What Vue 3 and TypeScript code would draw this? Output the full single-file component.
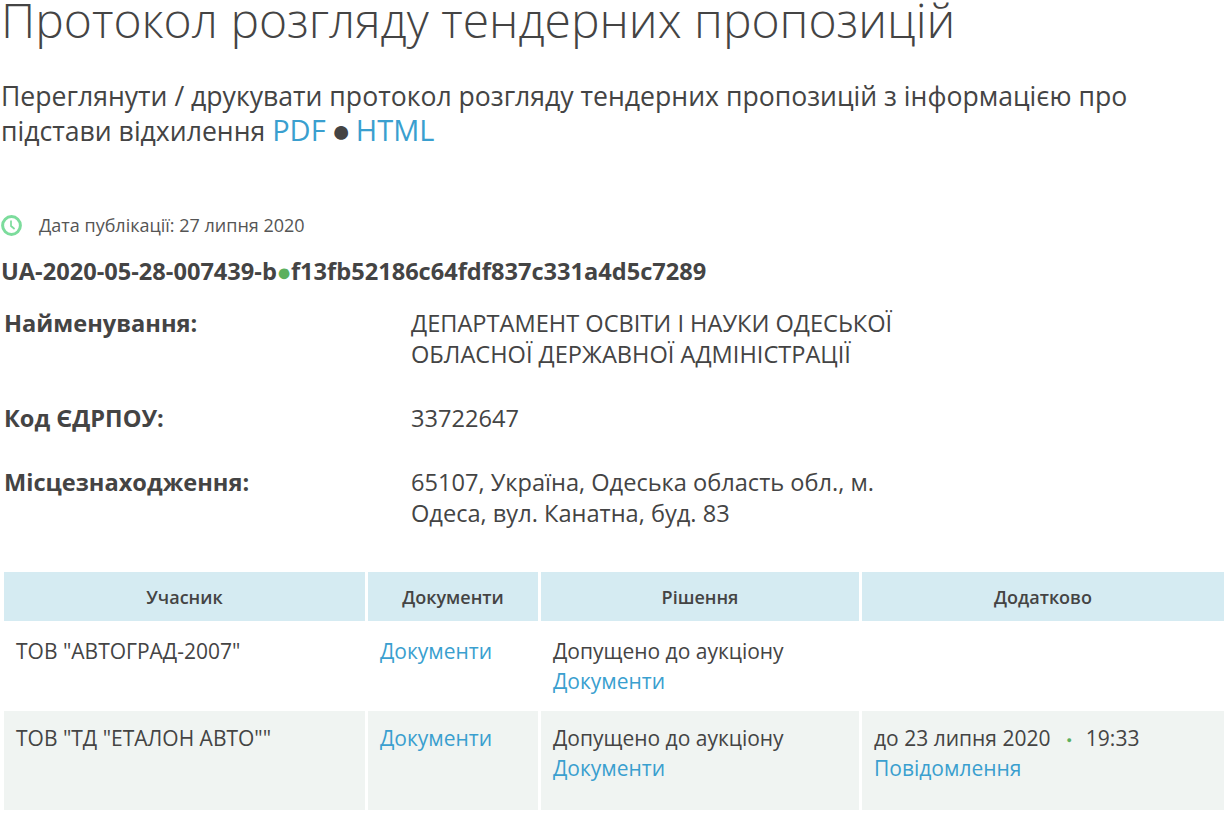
<script setup lang="ts">
interface Row {
  name: string
  extra?: { date: string; time: string; link: string }
}
const rows: Row[] = [
  { name: 'ТОВ "АВТОГРАД-2007"' },
  { name: 'ТОВ "ТД "ЕТАЛОН АВТО""', extra: { date: 'до 23 липня 2020', time: '19:33', link: 'Повідомлення' } }
]
</script>

<template>
  <div class="page">
    <h1 class="title">Протокол розгляду тендерних пропозицій</h1>
    <p class="lead">Переглянути / друкувати протокол розгляду тендерних пропозицій з інформацією про підстави відхилення <a href="#">PDF</a> <span class="sep">●</span> <a href="#">HTML</a></p>
    <div class="date">
      <svg class="clock" width="21" height="21" viewBox="0 0 21 21" fill="none">
        <circle cx="10.5" cy="10.5" r="8.9" stroke="#7cdc9c" stroke-width="3" />
        <path d="M10 5.5V11L13.6 14" stroke="#7cdc9c" stroke-width="1.7" />
      </svg>
      <span>Дата публікації: 27 липня 2020</span>
    </div>
    <div class="code">UA-2020-05-28-007439-b<span class="dot">●</span>f13fb52186c64fdf837c331a4d5c7289</div>
    <dl class="info">
      <dt>Найменування:</dt>
      <dd>ДЕПАРТАМЕНТ ОСВІТИ І НАУКИ ОДЕСЬКОЇ ОБЛАСНОЇ ДЕРЖАВНОЇ АДМІНІСТРАЦІЇ</dd>
      <dt>Код ЄДРПОУ:</dt>
      <dd>33722647</dd>
      <dt>Місцезнаходження:</dt>
      <dd>65107, Україна, Одеська область обл., м. Одеса, вул. Канатна, буд. 83</dd>
    </dl>
    <table class="table">
      <colgroup>
        <col class="c1" /><col class="c2" /><col class="c3" /><col class="c4" />
      </colgroup>
      <thead>
        <tr><th>Учасник</th><th>Документи</th><th>Рішення</th><th>Додатково</th></tr>
      </thead>
      <tbody>
        <tr v-for="r in rows" :key="r.name">
          <td>{{ r.name }}</td>
          <td><a href="#">Документи</a></td>
          <td>Допущено до аукціону<br /><a href="#">Документи</a></td>
          <td>
            <template v-if="r.extra">
              <div class="when">{{ r.extra.date }}<span class="mini">●</span>{{ r.extra.time }}</div><a href="#">{{ r.extra.link }}</a>
            </template>
          </td>
        </tr>
      </tbody>
    </table>
  </div>
</template>

<style scoped>
.page {
  width: 1229px;
  height: 819px;
  overflow: hidden;
  font-family: "Open Sans", sans-serif;
  color: #444;
  box-sizing: border-box;
  padding: 0 2px 0 1px;
}
a { color: #3a9fcf; text-decoration: none; }
.title {
  margin: -12px 0 0;
  font-size: 48px;
  line-height: 64px;
  font-weight: 300;
  white-space: nowrap;
}
.lead {
  margin: 27px 0 0;
  width: 1160px;
  font-size: 26.6px;
  line-height: 35px;
}
.lead a { font-size: 29px; line-height: 0; }
.sep { font-size: 32px; line-height: 0; margin: 0 -2px 0 -1px; vertical-align: -1px; }
.date {
  display: flex;
  align-items: center;
  gap: 17px;
  margin-top: 64px;
  font-size: 18px;
  line-height: 24px;
  color: #555;
}
.clock { flex: none; }
.code {
  margin-top: 18px;
  font-size: 23.6px;
  line-height: 32px;
  font-weight: 700;
  white-space: nowrap;
}
.dot { color: #5cb060; font-size: 25px; line-height: 0; margin: 0 -0.5px; vertical-align: -1px; }
.info {
  display: grid;
  grid-template-columns: 407px 490px;
  row-gap: 33px;
  margin: 21px 0 0 3px;
  font-size: 23.6px;
  line-height: 31px;
}
.info dt { font-weight: 700; }
.info dd { margin: 0; }
.table {
  border-collapse: separate;
  border-spacing: 3px;
  table-layout: fixed;
  width: 1226px;
  margin: 40px 0 0 0;
  font-size: 21px;
  line-height: 30px;
}
.c1 { width: 361px; }
.c2 { width: 170px; }
.c3 { width: 318px; }
th {
  background: #d5ebf2;
  height: 49px;
  padding: 0 12px;
  font-size: 18px;
  font-weight: 600;
  text-align: center;
}
td {
  padding: 12px;
  vertical-align: top;
}
tbody tr:nth-child(even) td { background: #f0f4f2; padding-bottom: 27px; }
.mini { color: #5cb060; font-size: 9px; line-height: 0; margin: 0 14px 0 16px; vertical-align: 3px; }
</style>
